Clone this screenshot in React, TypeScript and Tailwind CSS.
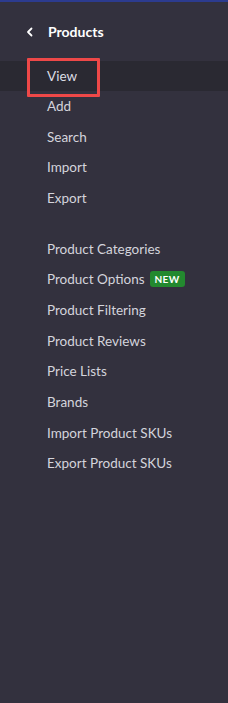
import React from "react";

const group1 = ["Add", "Search", "Import", "Export"];
const group2: { label: string; badge?: boolean }[] = [
  { label: "Product Categories" },
  { label: "Product Options", badge: true },
  { label: "Product Filtering" },
  { label: "Product Reviews" },
  { label: "Price Lists" },
  { label: "Brands" },
  { label: "Import Product SKUs" },
  { label: "Export Product SKUs" },
];

export default function App() {
  return (
    <div
      className="w-[228px] h-[703px] bg-[#33313e] flex flex-col overflow-hidden"
      style={{ fontFamily: "Lato, 'Open Sans', sans-serif" }}
    >
      <div className="h-[2px] bg-[#2c3b8f]" />
      <div className="h-[59px] flex items-center pl-[25px] gap-[13px]">
        <svg width="10" height="10" viewBox="0 0 10 10" className="text-white">
          <path d="M6.5 1.5 L3 5 L6.5 8.5" stroke="currentColor" strokeWidth="1.8" fill="none" strokeLinecap="round" strokeLinejoin="round" />
        </svg>
        <span className="text-white font-bold text-[14px]">Products</span>
      </div>
      <div className="relative h-[30px] bg-[#2a2932] flex items-center pl-[47px] text-[13.5px] text-[#dcdce4]">
        View
        <div className="absolute left-[27px] top-[-3px] w-[73px] h-[39px] border-[3px] border-[#ee4848] rounded-[1px]" />
      </div>
      {group1.map((l) => (
        <div key={l} className="h-[30.6px] flex items-center pl-[47px] text-[13.5px] text-[#d4d4dc]">
          {l}
        </div>
      ))}
      <div className="h-[20px]" />
      {group2.map((i) => (
        <div key={i.label} className="h-[30.7px] flex items-center pl-[47px] text-[13.5px] text-[#d4d4dc] gap-[5px]">
          {i.label}
          {i.badge && (
            <span className="h-[16px] w-[35px] rounded-[3px] bg-[#23892f] text-white text-[10px] font-bold flex items-center justify-center tracking-[0.5px]">
              NEW
            </span>
          )}
        </div>
      ))}
    </div>
  );
}
